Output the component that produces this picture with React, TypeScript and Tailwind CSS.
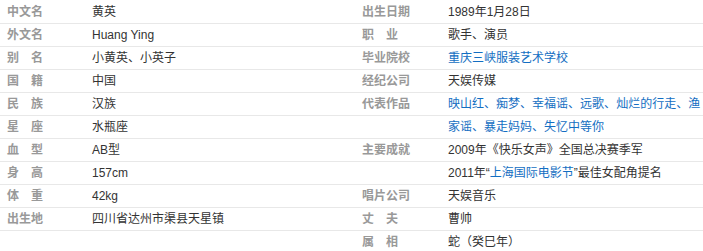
import type { ReactNode } from "react";

type Item = { label: string; value: ReactNode };

const lineBg =
  "bg-[repeating-linear-gradient(180deg,transparent_0_22px,#e8e8e8_22px_23px)]";

function A({ children }: { children: ReactNode }) {
  return <a className="text-[#136ec2] no-underline">{children}</a>;
}

const works = ["映山红", "痴梦", "幸福谣", "远歌", "灿烂的行走", "渔家谣", "暴走妈妈", "失忆中等你"];

const leftItems: Item[] = [
  { label: "中文名", value: "黄英" },
  { label: "外文名", value: "Huang Ying" },
  { label: "别名", value: "小黄英、小英子" },
  { label: "国籍", value: "中国" },
  { label: "民族", value: "汉族" },
  { label: "星座", value: "水瓶座" },
  { label: "血型", value: "AB型" },
  { label: "身高", value: "157cm" },
  { label: "体重", value: "42kg" },
  { label: "出生地", value: "四川省达州市渠县天星镇" },
];

const rightItems: Item[] = [
  { label: "出生日期", value: "1989年1月28日" },
  { label: "职业", value: "歌手、演员" },
  { label: "毕业院校", value: <A>重庆三峡服装艺术学校</A> },
  { label: "经纪公司", value: "天娱传媒" },
  {
    label: "代表作品",
    value: (
      <span className="text-[#136ec2]">
        {works.map((w, i) => (
          <span key={w}>
            {i > 0 && "、"}
            <A>{w}</A>
          </span>
        ))}
      </span>
    ),
  },
  {
    label: "主要成就",
    value: (
      <>
        <div>2009年《快乐女声》全国总决赛季军</div>
        <div>
          2011年“<A>上海国际电影节</A>”最佳女配角提名
        </div>
      </>
    ),
  },
  { label: "唱片公司", value: "天娱音乐" },
  { label: "丈夫", value: "曹帅" },
  { label: "属相", value: "蛇（癸巳年）" },
];

function Label({ text }: { text: string }) {
  return (
    <span className={text.length === 2 ? "tracking-[12px]" : ""}>{text}</span>
  );
}

function Column({ items, className, labelWidth }: { items: Item[]; className: string; labelWidth: string }) {
  return (
    <dl className={`${lineBg} ${className}`}>
      {items.map((item) => (
        <div key={item.label} className="flex">
          <dt className={`${labelWidth} shrink-0 font-bold text-[#999]`}>
            <Label text={item.label} />
          </dt>
          <dd className="min-w-0 flex-1 text-[#333]">{item.value}</dd>
        </div>
      ))}
    </dl>
  );
}

export default function App() {
  return (
    <div className="h-[251px] w-[703px] overflow-hidden bg-white pt-px font-['Liberation_Sans','Noto_Sans_CJK_SC',sans-serif] text-[12px] leading-[23px]">
      <div className="flex items-start">
        <Column items={leftItems} className="w-[352px] pl-[7px]" labelWidth="w-[85px]" />
        <Column items={rightItems} className="flex-1 pl-[10px]" labelWidth="w-[86px]" />
      </div>
    </div>
  );
}
